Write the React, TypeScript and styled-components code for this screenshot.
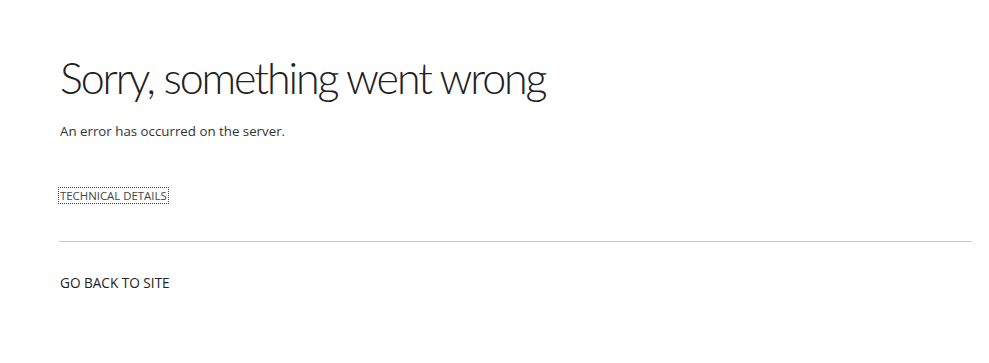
import styled, { createGlobalStyle } from "styled-components";

const GlobalStyle = createGlobalStyle`
	body {
		margin: 0;
		background: #ffffff;
		font-family: "Segoe UI", "Open Sans", "Noto Sans", sans-serif;
		color: #333333;
	}
`;

const Page = styled.div`
	padding: 50px 17px 40px 59px;
`;

const Title = styled.h1`
	margin: 0 0 0 1px;
	font-family: "Segoe UI Light", Lato, "Open Sans", sans-serif;
	font-size: 43px;
	font-weight: 300;
	line-height: 56px;
	letter-spacing: -2.1px;
	color: #212121;
`;

const Message = styled.p`
	margin: 16px 0 0 1px;
	font-size: 13.3px;
	line-height: 18px;
	color: #333333;
`;

const DetailsLink = styled.a`
	display: inline-block;
	margin-top: 48px;
	padding: 0 1px;
	font-size: 11.4px;
	line-height: 15px;
	color: #444444;
	text-decoration: none;
	outline: 1px dotted #444444;
	cursor: pointer;
`;

const Divider = styled.hr`
	margin: 36px 0 0;
	border: 0;
	border-top: 1px solid #c8c8c8;
`;

const BackLink = styled.a`
	display: inline-block;
	margin: 32px 0 0 1px;
	font-size: 13.6px;
	line-height: 18px;
	color: #212121;
	text-decoration: none;
	cursor: pointer;
`;

function App() {
	return (
		<>
			<GlobalStyle />
			<Page>
				<Title>Sorry, something went wrong</Title>
				<Message>An error has occurred on the server.</Message>
				<DetailsLink>TECHNICAL DETAILS</DetailsLink>
				<Divider />
				<BackLink>GO BACK TO SITE</BackLink>
			</Page>
		</>
	);
}

export default App;
